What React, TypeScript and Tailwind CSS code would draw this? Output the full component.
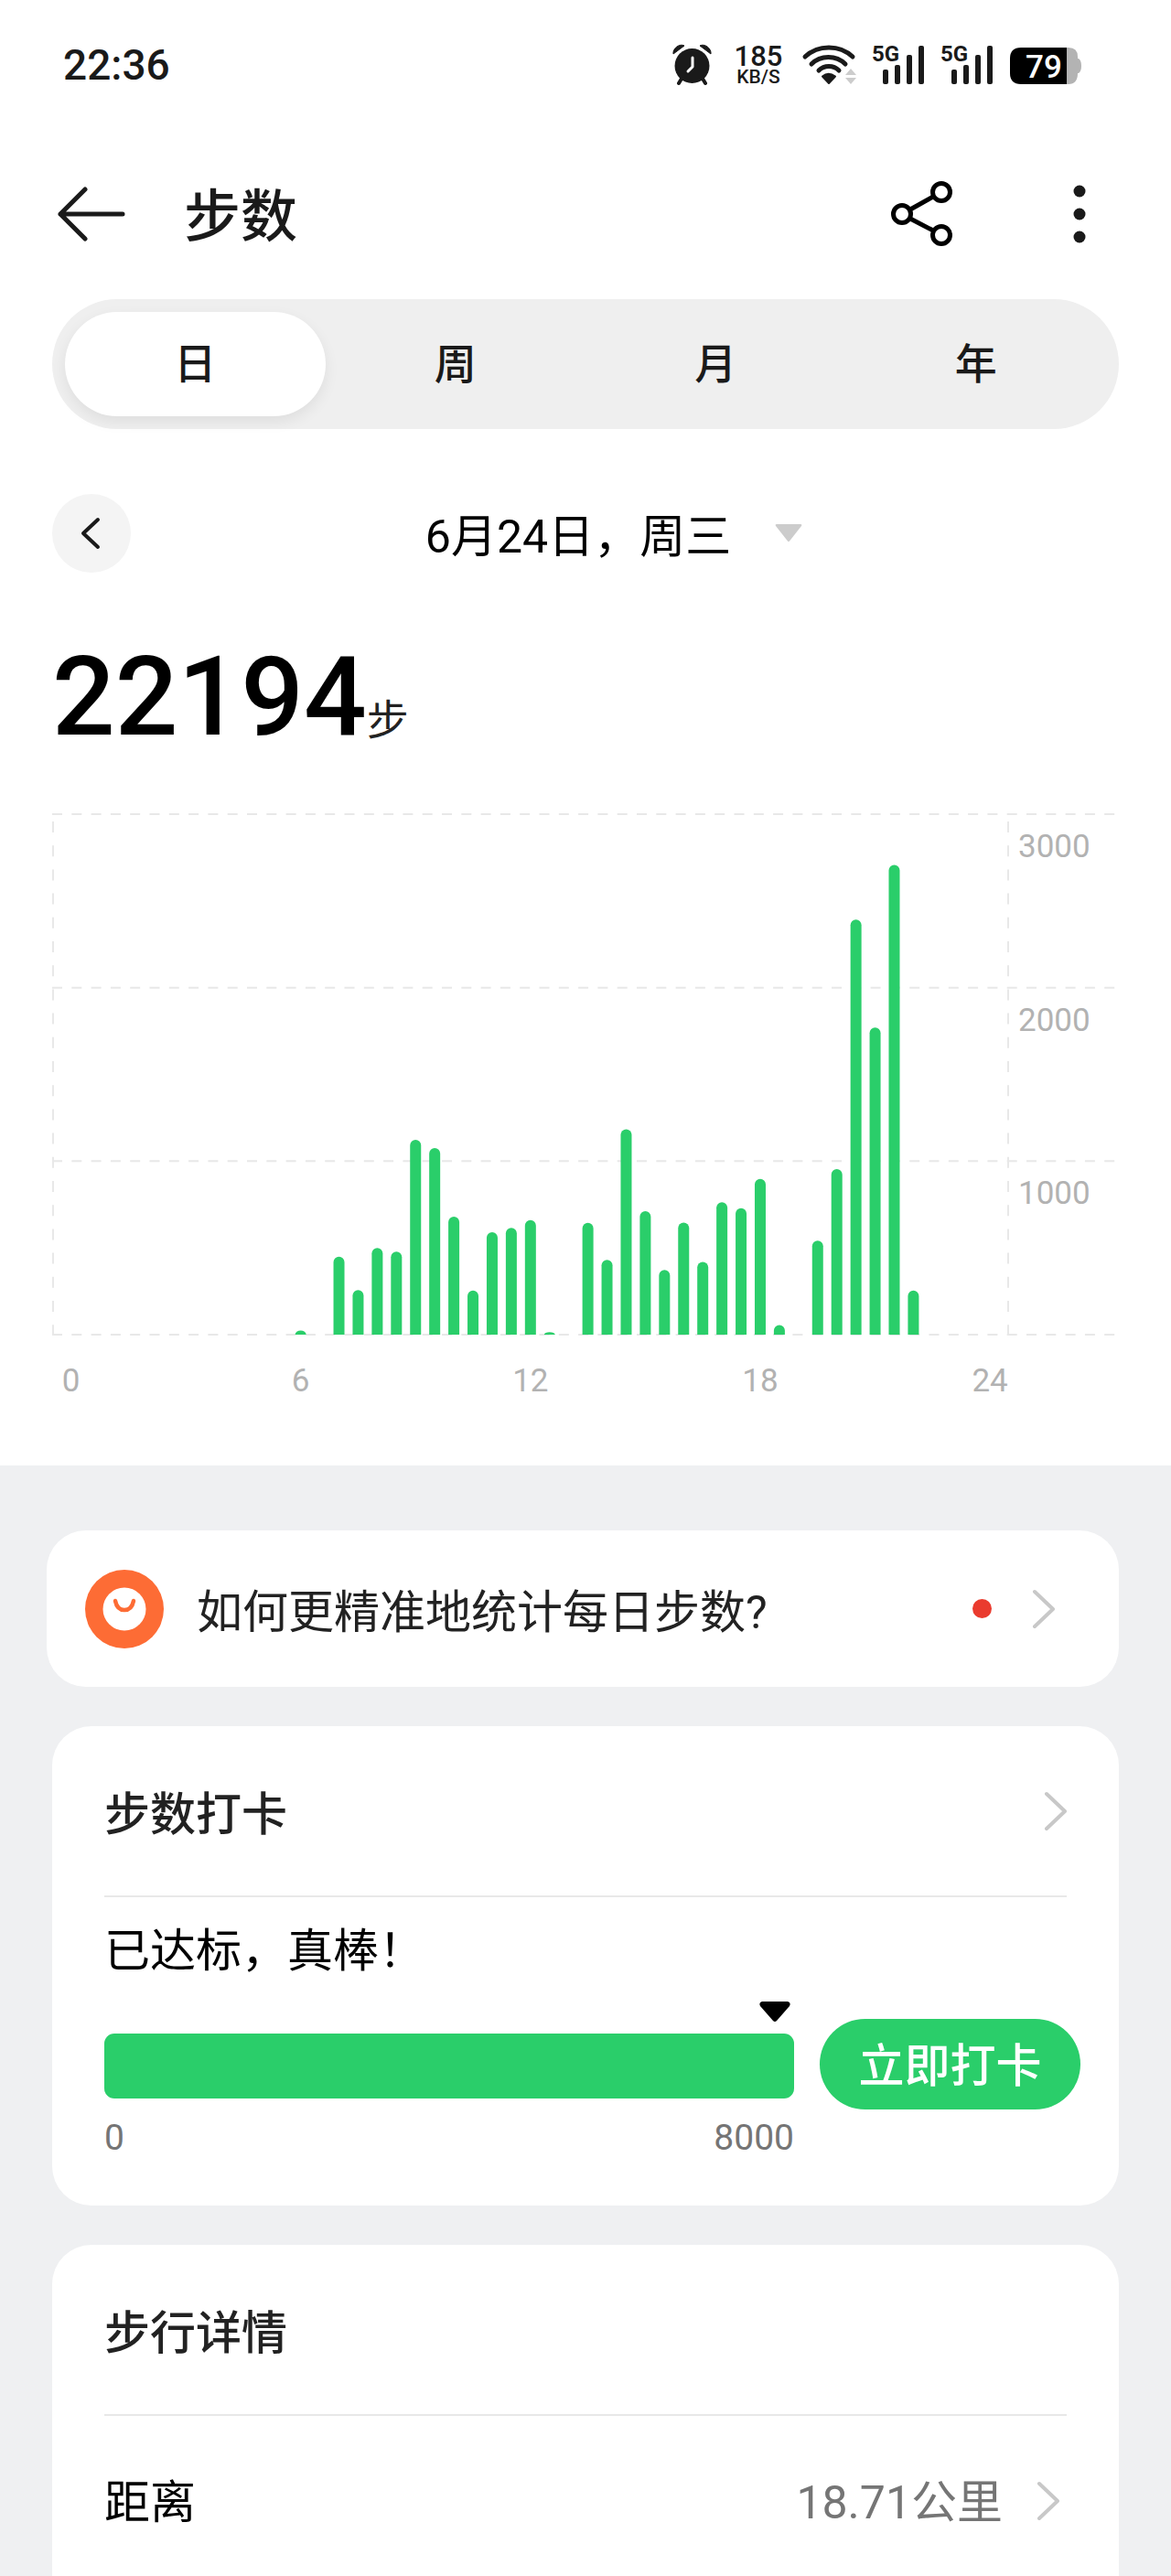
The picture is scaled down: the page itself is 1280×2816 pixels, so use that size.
const TABS = ["日", "周", "月", "年"];

// steps per half hour, starting at 00:00
const STEPS = [
  0, 0, 0, 0, 0, 0, 0, 0, 0, 0, 0, 0, 24, 0, 450, 257, 499, 479, 1123, 1075,
  680, 254, 591, 615, 661, 15, 0, 644, 431, 1184, 712, 373, 646, 419, 763, 729,
  898, 56, 0, 542, 954, 2392, 1770, 2707, 254, 0, 0, 0,
];

const BASE = 579;
const UNIT = 569 / 3000;
const SLOT = 20.93;
const slotX = (i: number) => 20.5 + i * SLOT;

function barPath(i: number, steps: number) {
  const h = steps * UNIT;
  const r = Math.min(6, h);
  const x = slotX(i) - 6;
  const top = BASE - h;
  return `M${x} ${BASE}V${top + r}A6 ${r} 0 0 1 ${x + 12} ${top + r}V${BASE}Z`;
}

function Signal() {
  return (
    <svg width="59" height="62" viewBox="0 -8 59 62" fill="#1a1a1a" aria-hidden="true">
      <text x="1" y="19" fontSize="24" fontWeight="700">5G</text>
      <rect x="13" y="28" width="6" height="16" rx="2" />
      <rect x="26" y="23" width="6" height="21" rx="2" />
      <rect x="39" y="12" width="6" height="32" rx="2" />
      <rect x="52" y="2" width="6" height="42" rx="2" />
    </svg>
  );
}

function StatusBar() {
  return (
    <div className="flex h-[141px] items-center justify-between pr-[98px] pl-[69px] text-[#1a1a1a]">
      <span className="text-[46px] leading-none font-medium">22:36</span>
      <div className="flex items-center gap-4">
        <svg width="50" height="46" viewBox="0 0 50 46" fill="#1a1a1a" aria-hidden="true">
          <circle cx="24.500" cy="24" r="19" />
          <path d="M4 11C3 5 11-1 16 2ZM45 11C46 5 38-1 33 2Z" stroke="#1a1a1a" strokeWidth="1" strokeLinejoin="round" />
          <path d="M13 38l-3 5M36 38l3 5" stroke="#1a1a1a" strokeWidth="4" strokeLinecap="round" />
          <path d="M25 15v10l-5 5" fill="none" stroke="#fff" strokeWidth="3" strokeLinecap="round" strokeLinejoin="round" />
        </svg>
        <div className="flex w-[62px] flex-col items-center font-medium">
          <span className="text-[31px] leading-[26px]">185</span>
          <span className="text-[21px] leading-[18px]">KB/S</span>
        </div>
        <svg width="60" height="46" viewBox="0 0 60 46" fill="none" aria-hidden="true">
          <g stroke="#1a1a1a" strokeWidth="5" strokeLinecap="round">
            <path d="M4 14C18 .500 42 .500 56 14" />
            <path d="M11 22C21 12 38 12 48 22" />
            <path d="M19 29C25 23 35 23 41 29" />
          </g>
          <path d="M23 35.500Q29.500 30 37 35.500L30 43Z" fill="#1a1a1a" stroke="#1a1a1a" strokeWidth="2" strokeLinejoin="round" />
          <path d="M48 34l6-7 6 7zM48 37h12l-6 7z" fill="#ccc" />
        </svg>
        <Signal />
        <Signal />
        <svg width="80" height="46" viewBox="0 0 80 46" aria-hidden="true">
          <path d="M60 4h6q10 0 10 10v2h1q3 2 3 8t-3 8h-1q0 12-10 12h-6z" fill="#b3b3b3" />
          <path d="M14 4h50v40H14Q2 44 2 32V16Q2 4 14 4z" />
          <text x="39" y="37" fill="#fff" fontSize="35" fontWeight="500" textAnchor="middle">79</text>
        </svg>
      </div>
    </div>
  );
}

function Header() {
  return (
    <header className="flex h-[186px] items-center justify-between pr-[90px] pl-[62px]">
      <div className="flex items-center gap-16">
        <button type="button" aria-label="返回">
          <svg width="75" height="62" viewBox="0 0 75 62" fill="none" stroke="#1a1a1a" strokeWidth="5" strokeLinecap="round" strokeLinejoin="round">
            <path d="M72 31H4M31 4L4 31l27 27" />
          </svg>
        </button>
        <h1 className="pt-2 text-[62px] leading-[72px] font-medium text-[#1a1a1a]">步数</h1>
      </div>
      <div className="flex items-center gap-32">
        <button type="button" aria-label="分享">
          <svg width="68" height="72" viewBox="0 0 68 72" fill="none" stroke="#000" strokeWidth="5">
            <circle cx="12" cy="36" r="9.500" />
            <circle cx="55" cy="12" r="9.500" />
            <circle cx="55" cy="59" r="9.500" />
            <path d="M21 31l25-14M21 41l25 13" />
          </svg>
        </button>
        <button type="button" aria-label="更多">
          <svg width="20" height="72" viewBox="0 0 20 72" fill="#1a1a1a">
            <circle cx="10" cy="11" r="6.500" />
            <circle cx="10" cy="36" r="6.500" />
            <circle cx="10" cy="61" r="6.500" />
          </svg>
        </button>
      </div>
    </header>
  );
}

function StepsChart() {
  return (
    <svg className="block w-full" viewBox="0 0 1166 660" role="img" aria-label="每半小时步数">
      <g stroke="#e8e8e8" strokeWidth="2">
        {[0, 1, 2, 3].map((n) => (
          <path key={n} d={`M0 ${BASE - n * 1000 * UNIT}H1164`} strokeDasharray="11 10.3" />
        ))}
        <path d="M1 10V579M1045 10V579" strokeDasharray="12 14.200" strokeDashoffset="-8" />
      </g>
      <g fill="#2ace6a">
        {STEPS.map((s, i) => (s > 0 ? <path key={i} d={barPath(i, s)} /> : null))}
      </g>
      <g fill="#b2b2b2" fontSize="35">
        {[3000, 2000, 1000].map((v) => (
          <text key={v} x="1056" y={BASE - v * UNIT + 47}>{v}</text>
        ))}
        {[0, 6, 12, 18, 24].map((h) => (
          <text key={h} x={slotX(h * 2)} y="641" textAnchor="middle">{h}</text>
        ))}
      </g>
    </svg>
  );
}

function Chevron() {
  return (
    <svg width="26" height="44" viewBox="0 0 26 44" fill="none" stroke="#c8c8c8" strokeWidth="4" strokeLinecap="round" strokeLinejoin="round" aria-hidden="true">
      <path d="M4 3l20 19L4 41" />
    </svg>
  );
}

export default function App() {
  return (
    <div className="flex min-h-screen flex-col bg-white font-['Roboto','Noto_Sans_CJK_SC',sans-serif] text-black">
      <StatusBar />
      <Header />

      <div className="px-[57px]">
        {/* Period switch */}
        <div role="tablist" className="flex h-[142px] rounded-full bg-[#efefef] p-3.5">
          {TABS.map((tab, i) => (
            <button
              key={tab}
              type="button"
              role="tab"
              aria-selected={i === 0}
              className={
                i === 0
                  ? "flex-1 rounded-full bg-white text-[46px] font-medium text-[#1a1a1a] shadow-[0_6px_16px_rgba(0,0,0,0.07)]"
                  : "flex-1 rounded-full text-[46px] font-medium text-[#1a1a1a]"
              }
            >
              {tab}
            </button>
          ))}
        </div>

        {/* Date picker */}
        <div className="mt-[71px] flex items-center">
          <button type="button" aria-label="前一天" className="flex size-[86px] items-center justify-center rounded-full bg-[#f4f4f4]">
            <svg width="24" height="36" viewBox="0 0 24 36" fill="none" stroke="#1a1a1a" strokeWidth="4" strokeLinecap="round" strokeLinejoin="round">
              <path d="M19 3L3 18l16 15" />
            </svg>
          </button>
          <button type="button" className="flex flex-1 items-center justify-center gap-12 pr-6 text-[50px] leading-[60px]">
            <span className="pt-2">6月24日，周三</span>
            <svg width="30" height="20" viewBox="0 0 30 20" fill="#ccc" aria-hidden="true">
              <path d="M2 0h26q2 0 1 2L16 18.500q-1 1-2 0L1 2Q0 0 2 0z" />
            </svg>
          </button>
        </div>

        <p className="mt-[59px] flex items-baseline">
          <span className="text-[121px] leading-[154px] font-medium">22194</span>
          <span className="text-[46px] text-[#222]">步</span>
        </p>

        <div className="mt-[41px]">
          <StepsChart />
        </div>
      </div>

      <main className="mt-[62px] flex flex-1 flex-col gap-[43px] bg-[#eff0f2] px-[57px] pt-[71px]">
        <a href="#tips" className="-ml-1.5 flex h-[171px] items-center rounded-[43px] bg-white pr-[70px] pl-[42px]">
          <svg width="86" height="86" viewBox="0 0 86 86" aria-hidden="true">
            <circle cx="43" cy="43" r="43" fill="#fd6c35" />
            <circle cx="43" cy="43" r="23.500" fill="#fff" />
            <path d="M33 34q2 10 10 10t10-10" fill="none" stroke="#fd6c35" strokeWidth="4.500" strokeLinecap="round" />
          </svg>
          <span className="ml-9 pt-2 text-[50px] leading-[60px] text-[#222]">如何更精准地统计每日步数?</span>
          <span className="ml-auto size-[21px] rounded-full bg-[#ea3b2e]" />
          <span className="ml-[43px]">
            <Chevron />
          </span>
        </a>

        <section className="rounded-[43px] bg-white pl-[57px]">
          <div className="mr-[57px] flex h-[187px] items-center justify-between border-b-2 border-[#e8e8e8]">
            <h2 className="pt-2 text-[50px] leading-[60px] font-medium text-[#222]">步数打卡</h2>
            <Chevron />
          </div>
          <p className="mt-[29px] text-[50px] leading-[60px]">已达标，真棒！</p>
          <div className="mt-3.5 flex gap-7 pr-[42px] pb-[51px]">
            <div className="flex-1">
              <svg className="mt-2.5 mr-1 ml-auto block" width="34" height="24" viewBox="0 0 34 24" aria-hidden="true">
                <path d="M3 1h28q4 1 2 5L19 22q-2 2-4 0L1 6Q-1 2 3 1z" />
              </svg>
              <div
                role="progressbar"
                aria-label="步数目标"
                aria-valuemin={0}
                aria-valuemax={8000}
                aria-valuenow={8000}
                className="mt-3 h-[71px] rounded-[11px] bg-[#2ace6a]"
              />
              <div className="mt-5 flex justify-between text-[39px] leading-[46px] text-[#757575]">
                <span>0</span>
                <span>8000</span>
              </div>
            </div>
            <button type="button" className="mt-[30px] h-[99px] w-[285px] rounded-full bg-[#2ace6a] pt-1.5 text-[50px] font-medium text-white">
              立即打卡
            </button>
          </div>
        </section>

        <section className="flex-1 rounded-t-[43px] bg-white px-[57px]">
          <div className="flex h-[187px] items-center border-b-2 border-[#e8e8e8]">
            <h2 className="pt-2 text-[50px] leading-[60px] font-medium text-[#222]">步行详情</h2>
          </div>
          <a href="#distance" className="flex h-[176px] items-center pt-2.5 text-[50px] leading-[60px]">
            <span className="pt-1">距离</span>
            <span className="ml-auto pt-1 text-[#757575]">18.71公里</span>
            <span className="mr-2 ml-9">
              <Chevron />
            </span>
          </a>
        </section>
      </main>
    </div>
  );
}
